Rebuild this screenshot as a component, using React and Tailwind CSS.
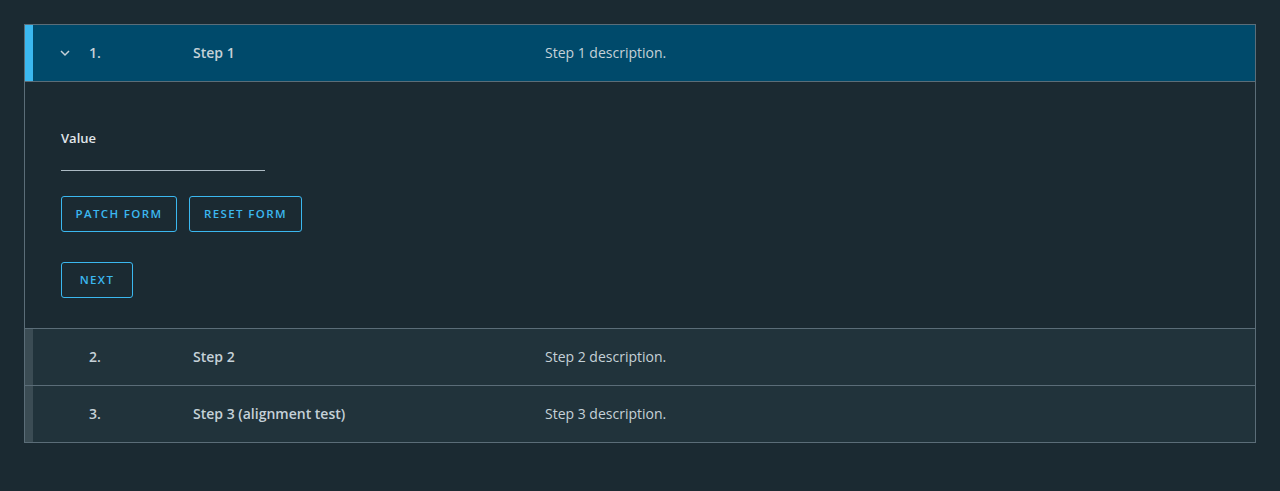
import React from 'react';

const ChevronDown = () => (
  <svg width="12" height="12" viewBox="0 0 12 12" fill="none" stroke="#c5d1d8" strokeWidth="1.5">
    <path d="M2 4l4 4 4-4" />
  </svg>
);

const StepHeader = ({ num, title, desc, active }) => (
  <div
    className={`flex items-center h-[56px] pb-[2px] ${active ? 'bg-[#004a6b]' : 'bg-[#21333b]'}`}
  >
    <div className={`w-[8px] shrink-0 self-stretch -mb-[2px] ${active ? 'bg-[#3bb8f0]' : 'bg-[#3b4c54]'}`} />
    <div className="w-[56px] shrink-0 pl-[26px] pt-[2px] flex items-center">{active && <ChevronDown />}</div>
    <div className="w-[104px] shrink-0 text-[14px] font-semibold text-[#c5d1d8]">{num}</div>
    <div className="w-[352px] shrink-0 text-[14px] font-semibold text-[#c5d1d8]">{title}</div>
    <div className="text-[14px] text-[#c5d1d8]">{desc}</div>
  </div>
);

const OutlineButton = ({ children, width }) => (
  <button
    className={`h-[36px] ${width} border border-[#3bb8f0] rounded-[3px] text-[11.5px] font-semibold tracking-[0.12em] text-[#3bb8f0]`}
  >
    {children}
  </button>
);

export default function App() {
  return (
    <div
      className="min-h-[491px] bg-[#1b2a32] p-[24px]"
      style={{ fontFamily: '"Open Sans", Lato, sans-serif' }}
    >
      <div className="border border-[#5b6d78]">
        <StepHeader num="1." title="Step 1" desc="Step 1 description." active />
        <div className="border-t border-[#5b6d78] px-[36px] pt-[47px] pb-[30px]">
          <label className="block text-[13px] leading-[18px] font-semibold text-[#e1e6ea]">Value</label>
          <div className="w-[204px] h-[24px] border-b border-[#acbac3]" />
          <div className="flex gap-[12px] mt-[25px]">
            <OutlineButton width="w-[116px]">PATCH FORM</OutlineButton>
            <OutlineButton width="w-[113px]">RESET FORM</OutlineButton>
          </div>
          <div className="mt-[30px]">
            <OutlineButton width="w-[72px]">NEXT</OutlineButton>
          </div>
        </div>
        <div className="border-t border-[#5b6d78]">
          <StepHeader num="2." title="Step 2" desc="Step 2 description." />
        </div>
        <div className="border-t border-[#5b6d78]">
          <StepHeader num="3." title="Step 3 (alignment test)" desc="Step 3 description." />
        </div>
      </div>
    </div>
  );
}
